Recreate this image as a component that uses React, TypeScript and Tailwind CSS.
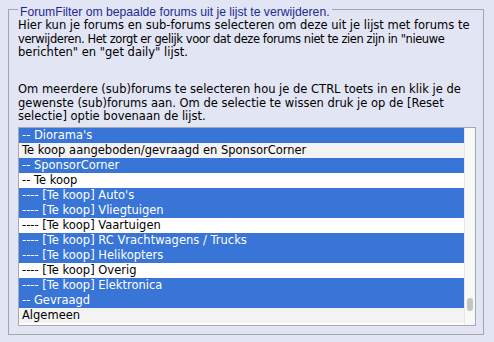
const rows: { label: string; kind: 'sel' | 'cat' | 'plain' }[] = [
  { label: "-- Diorama's", kind: 'sel' },
  { label: 'Te koop aangeboden/gevraagd en SponsorCorner', kind: 'cat' },
  { label: '-- SponsorCorner', kind: 'sel' },
  { label: '-- Te koop', kind: 'plain' },
  { label: "---- [Te koop] Auto's", kind: 'sel' },
  { label: '---- [Te koop] Vliegtuigen', kind: 'sel' },
  { label: '---- [Te koop] Vaartuigen', kind: 'plain' },
  { label: '---- [Te koop] RC Vrachtwagens / Trucks', kind: 'sel' },
  { label: '---- [Te koop] Helikopters', kind: 'sel' },
  { label: '---- [Te koop] Overig', kind: 'plain' },
  { label: '---- [Te koop] Elektronica', kind: 'sel' },
  { label: '-- Gevraagd', kind: 'sel' },
  { label: 'Algemeen', kind: 'cat' },
]

export default function App() {
  return (
    <div className="min-h-screen bg-[#e2e5f3] pl-[8px] pr-[10px] pt-[9px] font-['DejaVu_Sans',sans-serif]">
      <div className="relative w-[476px] border border-[#a6a6a6] pl-[9px] pr-[7px] pt-[9px] pb-[8px]">
        {/* legend over the top border */}
        <span className="absolute left-[9px] top-[-5px] px-[2px] bg-[#e2e5f3] text-[12.2px] leading-[14px] text-[#1e2a94] font-['Liberation_Sans',Arial,sans-serif] whitespace-nowrap">
          ForumFilter om bepaalde forums uit je lijst te verwijderen.
        </span>

        <div className="text-[11.5px] leading-[13.5px] text-black whitespace-nowrap">
          <p>
            Hier kun je forums en sub-forums selecteren om deze uit je lijst met forums te
            <br />
            <span className="tracking-[-0.42px]">
              verwijderen. Het zorgt er gelijk voor dat deze forums niet te zien zijn in "nieuwe
            </span>
            <br />
            berichten" en "get daily" lijst.
          </p>
          <p className="mt-[23.5px]">
            Om meerdere (sub)forums te selecteren hou je de CTRL toets in en klik je de
            <br />
            gewenste (sub)forums aan. Om de selectie te wissen druk je op de [Reset
            <br />
            selectie] optie bovenaan de lijst.
          </p>
        </div>

        {/* select list */}
        <div className="mt-[3.5px] flex border border-[#a9a9a9] bg-white h-[199px] overflow-hidden">
          <div className="flex-1 min-w-0 pb-[2px]">
            {rows.map((r, i) => (
              <div
                key={i}
                className={
                  'h-[15px] leading-[15px] pl-[3px] text-[11.5px] whitespace-nowrap ' +
                  (r.kind === 'sel'
                    ? 'bg-[#3875d7] text-white'
                    : r.kind === 'cat'
                    ? 'bg-[#f3f3f3] text-black'
                    : 'bg-white text-black')
                }
              >
                {r.label}
              </div>
            ))}
          </div>
          <div className="w-[11px] bg-[#f8f8f8] border-l border-[#e6e6e6] flex flex-col justify-end items-center pb-[14px]">
            <div className="w-[6px] h-[13px] rounded-full bg-[#c4c4c4]" />
          </div>
        </div>
      </div>
    </div>
  )
}
